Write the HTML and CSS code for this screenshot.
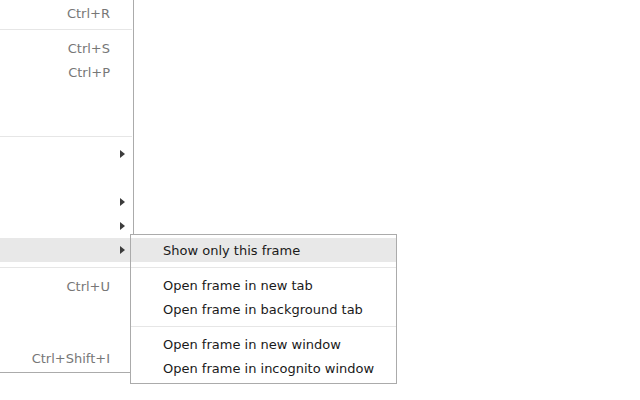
FILE: index.html
```html
<!DOCTYPE html>
<html>
<head>
<meta charset="utf-8">
<link rel="stylesheet" href="styles.css">
</head>
<body>
<div class="page">
  <div class="menu main">
    <div class="item"><span class="key">Ctrl+R</span></div>
    <div class="sep"></div>
    <div class="item"><span class="key">Ctrl+S</span></div>
    <div class="item"><span class="key">Ctrl+P</span></div>
    <div class="item"></div>
    <div class="item"></div>
    <div class="sep"></div>
    <div class="item"><span class="arrow"></span></div>
    <div class="item"></div>
    <div class="item"><span class="arrow"></span></div>
    <div class="item"><span class="arrow"></span></div>
    <div class="item active"><span class="arrow"></span></div>
    <div class="sep"></div>
    <div class="item"><span class="key">Ctrl+U</span></div>
    <div class="item"></div>
    <div class="item"></div>
    <div class="item"><span class="key">Ctrl+Shift+I</span></div>
  </div>
  <div class="menu sub">
    <div class="sitem active">Show only this frame</div>
    <div class="sep"></div>
    <div class="sitem">Open frame in new tab</div>
    <div class="sitem">Open frame in background tab</div>
    <div class="sep"></div>
    <div class="sitem">Open frame in new window</div>
    <div class="sitem">Open frame in incognito window</div>
  </div>
</div>
</body>
</html>
```

FILE: styles.css
```css
html, body {
  margin: 0;
  padding: 0;
  background: #ffffff;
}
.page {
  position: relative;
  width: 640px;
  height: 400px;
  overflow: hidden;
  font-family: "DejaVu Sans", sans-serif;
  font-size: 13px;
  color: #1a1a1a;
}
.main {
  width: 133px;
  padding-top: 0;
  padding-bottom: 3px;
  border-right: 1px solid #ababab;
  border-bottom: 1px solid #ababab;
  background: #ffffff;
}
.item {
  height: 24px;
  display: flex;
  align-items: center;
  justify-content: flex-end;
}
.item.active {
  background: #e8e8e8;
}
.key {
  color: #777777;
  margin-right: 23px;
  padding-top: 2px;
}
.arrow {
  width: 0;
  height: 0;
  border-left: 5px solid #3c3c3c;
  border-top: 4px solid transparent;
  border-bottom: 4px solid transparent;
  margin-right: 8px;
}
.sep {
  height: 11px;
  display: flex;
  flex-direction: column;
}
.sep::before {
  content: "";
  display: block;
  margin-top: 5px;
  height: 1px;
  background: #e6e6e6;
}
.main .sep::before {
  margin-right: 1px;
}
.sub {
  position: absolute;
  left: 130px;
  top: 234px;
  width: 265px;
  padding-top: 3px;
  padding-bottom: 3px;
  border: 1px solid #ababab;
  background: #ffffff;
}
.sitem {
  box-sizing: border-box;
  height: 24px;
  line-height: 22px;
  padding-top: 2px;
  padding-left: 32px;
  white-space: nowrap;
}
.sitem.active {
  background: #e8e8e8;
}
```
